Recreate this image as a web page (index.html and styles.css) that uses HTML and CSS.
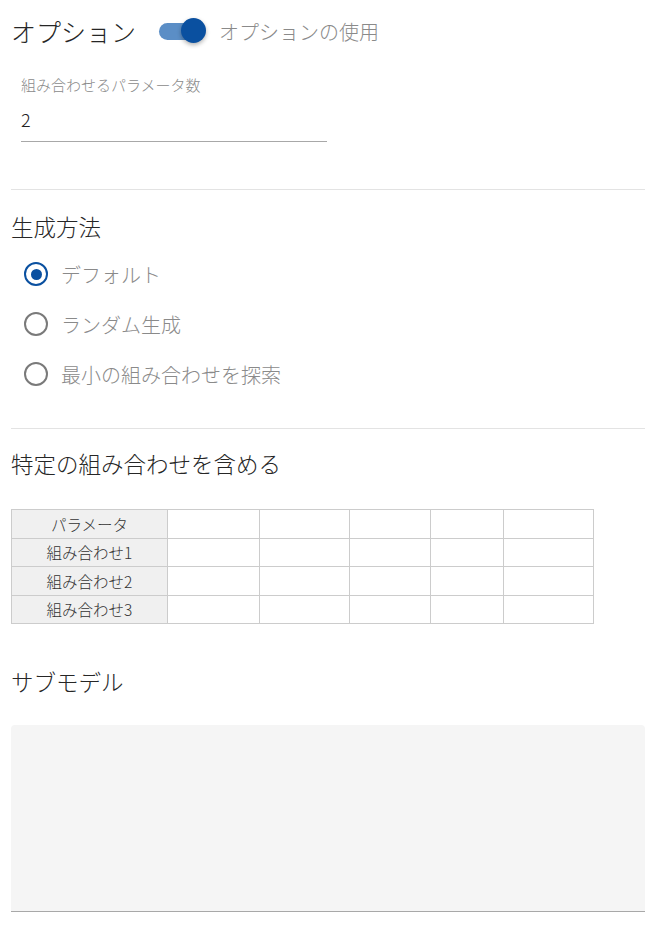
FILE: index.html
```html
<!DOCTYPE html>
<html lang="ja">
<head>
  <meta charset="UTF-8" />
  <meta name="viewport" content="width=device-width, initial-scale=1.0" />
  <title>オプション</title>
  <link rel="stylesheet" href="styles.css">
</head>
<body>
  <div class="page">
    <div class="options-head">
      <h1 class="page-title">オプション</h1>
      <label class="switch">
        <span class="switch-track"></span>
        <span class="switch-thumb"></span>
      </label>
      <span class="switch-label">オプションの使用</span>
    </div>

    <div class="field">
      <div class="field-label">組み合わせるパラメータ数</div>
      <div class="field-input">2</div>
    </div>

    <hr class="divider divider-first">

    <h2 class="section-title">生成方法</h2>
    <div class="radio-group">
      <div class="radio-row">
        <span class="radio checked"></span>
        <span class="radio-label">デフォルト</span>
      </div>
      <div class="radio-row">
        <span class="radio"></span>
        <span class="radio-label">ランダム生成</span>
      </div>
      <div class="radio-row">
        <span class="radio"></span>
        <span class="radio-label">最小の組み合わせを探索</span>
      </div>
    </div>

    <hr class="divider divider-second">

    <h2 class="section-title">特定の組み合わせを含める</h2>
    <table class="combo-table">
      <tr>
        <th class="c1">パラメータ</th>
        <td class="c2"></td><td class="c3"></td><td class="c4"></td><td class="c5"></td><td class="c6"></td>
      </tr>
      <tr>
        <th>組み合わせ1</th>
        <td></td><td></td><td></td><td></td><td></td>
      </tr>
      <tr>
        <th>組み合わせ2</th>
        <td></td><td></td><td></td><td></td><td></td>
      </tr>
      <tr>
        <th>組み合わせ3</th>
        <td></td><td></td><td></td><td></td><td></td>
      </tr>
    </table>

    <h2 class="section-title submodel-title">サブモデル</h2>
    <div class="submodel-box"></div>
  </div>
</body>
</html>
```

FILE: styles.css
```css
:root {
  --blue: #0a50a0;
  --blue-light: #5b8ec6;
  --text-dark: #262626;
  --text-gray: #8a8a8a;
  --line: #e3e3e3;
}

body {
  margin: 0;
  font-family: "Noto Sans CJK JP", "Noto Sans", sans-serif;
  font-weight: 300;
  color: var(--text-dark);
  background: #fff;
}

.page {
  padding-left: 11px;
  width: 634px;
}

.options-head {
  display: flex;
  align-items: center;
  height: 62px;
}

.page-title {
  margin: 0;
  font-size: 25px;
  font-weight: 300;
  line-height: 30px;
}

.switch {
  position: relative;
  display: block;
  width: 47px;
  height: 26px;
  margin-left: 23px;
}

.switch-track {
  position: absolute;
  left: 0;
  top: 5px;
  width: 44px;
  height: 17px;
  border-radius: 9px;
  background: var(--blue-light);
}

.switch-thumb {
  position: absolute;
  right: 0;
  top: 0;
  width: 25px;
  height: 25px;
  border-radius: 50%;
  background: var(--blue);
  box-shadow: 0 2px 4px rgba(0, 0, 0, 0.3);
}

.switch-label {
  margin-left: 13px;
  font-size: 20px;
  color: var(--text-gray);
}

.field {
  margin: 13px 0 0 10px;
  width: 306px;
}

.field-label {
  font-size: 15px;
  line-height: 20px;
  color: var(--text-gray);
}

.field-input {
  padding: 12px 0 10px;
  font-size: 18px;
  line-height: 24px;
  color: #222;
  border-bottom: 1px solid #a8a8a8;
}

.divider {
  margin: 0;
  border: none;
  border-top: 1px solid var(--line);
}

.divider-first {
  margin-top: 47px;
}

.divider-second {
  margin-top: 29px;
}

.section-title {
  margin: 21px 0 0;
  font-size: 22.5px;
  font-weight: 300;
  line-height: 30px;
}

.divider-second + .section-title {
  margin-top: 19px;
}

.radio-group {
  margin-top: 8px;
}

.radio-row {
  display: flex;
  align-items: center;
  height: 50px;
  padding-left: 13px;
}

.radio {
  box-sizing: border-box;
  width: 24px;
  height: 24px;
  border: 2.5px solid #7a7a7a;
  border-radius: 50%;
  display: flex;
  align-items: center;
  justify-content: center;
}

.radio.checked {
  border-color: var(--blue);
}

.radio.checked::after {
  content: "";
  width: 11px;
  height: 11px;
  border-radius: 50%;
  background: var(--blue);
}

.radio-label {
  margin-left: 13px;
  font-size: 20px;
  color: var(--text-gray);
}

.combo-table {
  margin-top: 31px;
  border-collapse: collapse;
  font-size: 15.5px;
  color: #333;
}

.combo-table th,
.combo-table td {
  border: 1px solid #cccccc;
  height: 27.5px;
  padding: 0;
}

.combo-table th {
  background: #f0f0f0;
  font-weight: 300;
  line-height: 20px;
  text-align: center;
}

.c1 { width: 155px; }
.c2 { width: 91px; }
.c3 { width: 89px; }
.c4 { width: 80px; }
.c5 { width: 72px; }
.c6 { width: 89px; }

.submodel-title {
  margin-top: 42px;
}

.submodel-box {
  margin-top: 29px;
  height: 186px;
  background: #f5f5f5;
  border-bottom: 1px solid #a8a8a8;
  border-radius: 4px 4px 0 0;
}
```
